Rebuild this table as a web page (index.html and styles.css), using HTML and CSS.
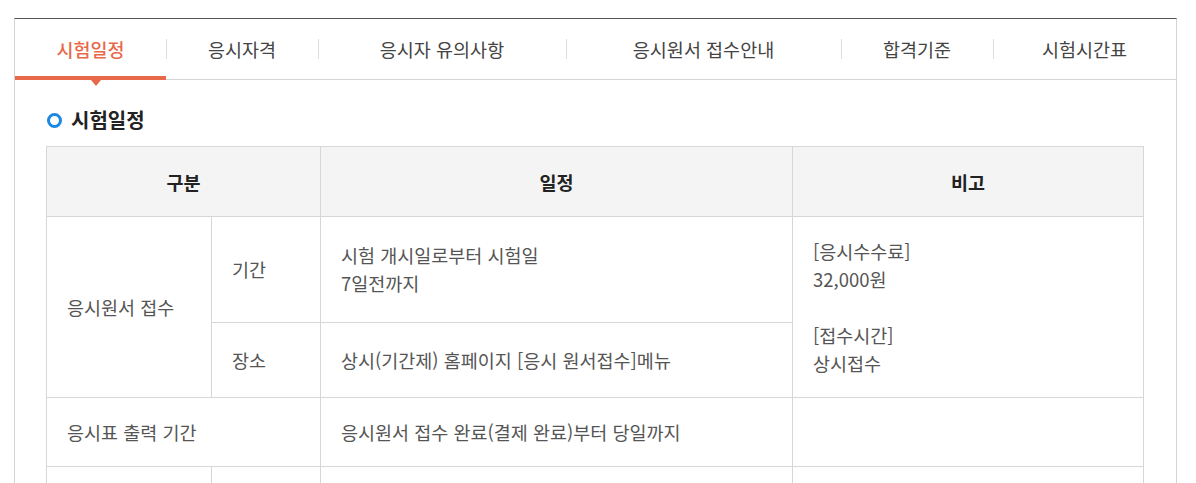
FILE: index.html
```html
<!DOCTYPE html>
<html lang="ko">
<head>
<meta charset="utf-8">
<title>시험일정</title>
<link rel="stylesheet" href="styles.css">
</head>
<body>
<div class="box">
  <ul class="tabs">
    <li class="tab tab-1 active">시험일정</li>
    <li class="tab tab-2">응시자격</li>
    <li class="tab tab-3">응시자 유의사항</li>
    <li class="tab tab-4">응시원서 접수안내</li>
    <li class="tab tab-5">합격기준</li>
    <li class="tab tab-6">시험시간표</li>
  </ul>
  <div class="content">
    <h2 class="title"><span class="ring"></span>시험일정</h2>
    <table class="sched">
      <colgroup>
        <col class="c1"><col class="c2"><col class="c3"><col class="c4">
      </colgroup>
      <thead>
        <tr><th colspan="2">구분</th><th>일정</th><th>비고</th></tr>
      </thead>
      <tbody>
        <tr>
          <td rowspan="2">응시원서 접수</td>
          <td>기간</td>
          <td>시험 개시일로부터 시험일<br>7일전까지</td>
          <td rowspan="2">[응시수수료]<br>32,000원<br><br>[접수시간]<br>상시접수</td>
        </tr>
        <tr>
          <td>장소</td>
          <td>상시(기간제) 홈페이지 [응시 원서접수]메뉴</td>
        </tr>
        <tr>
          <td colspan="2">응시표 출력 기간</td>
          <td>응시원서 접수 완료(결제 완료)부터 당일까지</td>
          <td></td>
        </tr>
        <tr>
          <td>&nbsp;</td><td>&nbsp;</td><td>&nbsp;</td><td>&nbsp;</td>
        </tr>
      </tbody>
    </table>
  </div>
</div>
</body>
</html>
```

FILE: styles.css
```css
* { box-sizing: border-box; }
html, body { margin: 0; padding: 0; background: #fff; }
body {
  font-family: "Noto Sans CJK KR", "Noto Sans", sans-serif;
  color: #555;
  padding: 18px 0 0 14px;
}
.box {
  width: 1163px;
  border-top: 1px solid #555;
  border-left: 1px solid #d4d4d4;
  border-right: 1px solid #d4d4d4;
  min-height: 600px;
}
.tabs {
  list-style: none;
  margin: 0;
  padding: 0;
  display: flex;
  height: 61px;
  border-bottom: 1px solid #d4d4d4;
}
.tab {
  position: relative;
  display: flex;
  align-items: center;
  justify-content: center;
  font-size: 18.5px;
  color: #444;
  height: 60px;
}
.tab + .tab::before {
  content: "";
  position: absolute;
  left: 0;
  top: 20px;
  height: 20px;
  width: 1px;
  background: #ddd;
}
.tab-1 { width: 151px; }
.tab-2 { width: 152px; }
.tab-3 { width: 248px; }
.tab-4 { width: 275px; }
.tab-5 { width: 152px; }
.tab-6 { width: 183px; }
.tab.active {
  color: #e8694a;
  font-weight: 500;
}
.tab.active::after {
  content: "";
  position: absolute;
  left: 0;
  right: 0;
  bottom: -1px;
  height: 4px;
  background: #e8694a;
}
.tabs .tab-1::before {
  content: "";
  position: absolute;
  left: 76px;
  bottom: -7px;
  width: 0;
  height: 0;
  border-left: 5px solid transparent;
  border-right: 5px solid transparent;
  border-top: 6px solid #e8694a;
  z-index: 2;
}
.content {
  padding: 27px 31px 0 31px;
}
.title {
  margin: 0 0 13px 0;
  display: flex;
  align-items: center;
  font-size: 20px;
  line-height: 26px;
  font-weight: 700;
  color: #222;
}
.ring {
  width: 15px;
  height: 15px;
  border: 3px solid #1d87e4;
  border-radius: 50%;
  margin: 0 9px 0 1px;
}
.sched {
  width: 1097px;
  border-collapse: collapse;
  table-layout: fixed;
  font-size: 18.5px;
  line-height: 28px;
}
.c1 { width: 165px; }
.c2 { width: 109px; }
.c3 { width: 472px; }
.c4 { width: 351px; }
.sched th, .sched td {
  border: 1px solid #d7d7d7;
  padding: 20px 20px;
  text-align: left;
  vertical-align: middle;
}
.sched th {
  background: #f4f4f4;
  color: #222;
  font-weight: 700;
  text-align: center;
  padding: 21px 20px 20px;
}
.sched td { color: #555; }
```
